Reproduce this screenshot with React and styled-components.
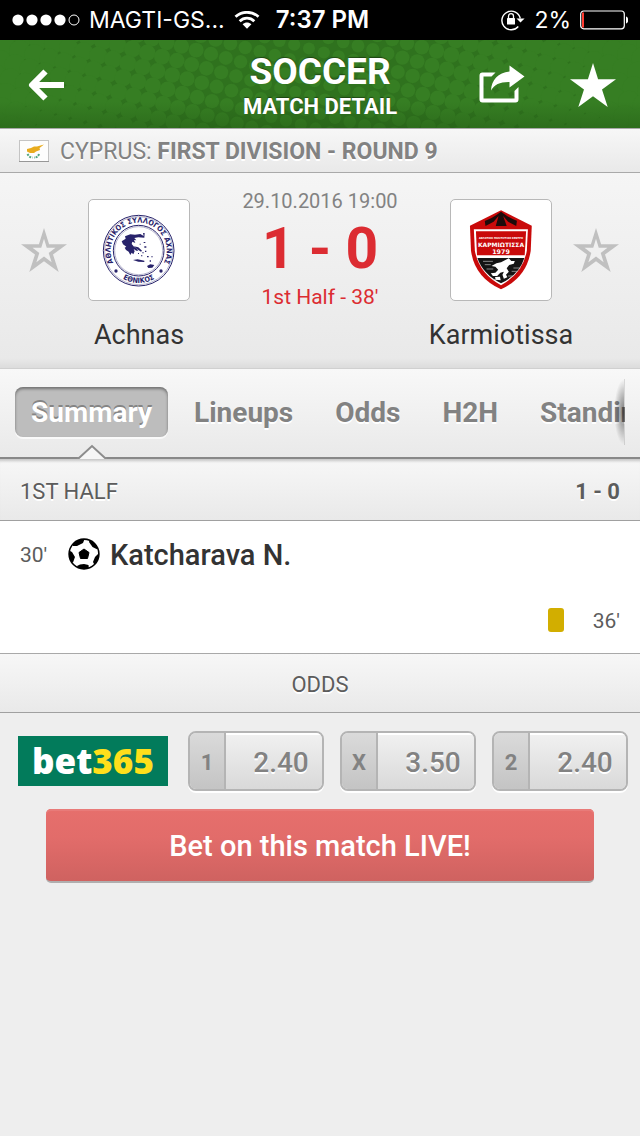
import React from "react";
import styled, { createGlobalStyle, css } from "styled-components";

const GlobalStyle = createGlobalStyle`
  * { box-sizing: border-box; }
  body {
    margin: 0;
    background: #eeeeee;
    font-family: Roboto, "Liberation Sans", sans-serif;
    color: #333333;
  }
  button { font: inherit; color: inherit; border: 0; padding: 0; margin: 0; background: none; cursor: pointer; }
  h1, h2, p, ul { margin: 0; padding: 0; font-weight: inherit; }
  ul { list-style: none; }
  svg { display: block; }
`;

const Screen = styled.div`
  display: flex;
  flex-direction: column;
  min-height: 100vh;
`;

/* ---------- status bar ---------- */

const StatusBar = styled.div`
  display: grid;
  grid-template-columns: 1fr auto 1fr;
  align-items: center;
  gap: 16px;
  height: 40px;
  padding: 0 12px;
  background: #000;
  color: #fff;
  font-family: Inter, "Liberation Sans", sans-serif;
  font-size: 23px;
  line-height: 40px;
  white-space: nowrap;
`;

const StatusGroup = styled.div`
  display: flex;
  align-items: center;
  justify-content: ${(p) => (p.$end ? "flex-end" : "flex-start")};
  gap: 9px;
`;

const Clock = styled.span`
  font-size: 24px;
  font-weight: 600;
`;

/* ---------- header ---------- */

const Header = styled.header`
  position: relative;
  display: grid;
  grid-template-columns: 1fr auto 1fr;
  align-items: center;
  height: 88px;
  padding: 2px 23px 0;
  background: #2f721e;
  color: #fff;
  overflow: hidden;
`;

const Halftone = styled.svg`
  position: absolute;
  inset: 0;
  width: 100%;
  height: 100%;
`;

const HeaderSide = styled.div`
  position: relative;
  display: flex;
  align-items: center;
  justify-content: ${(p) => (p.$end ? "flex-end" : "flex-start")};
  gap: 44px;
`;

const HeaderTitle = styled.div`
  position: relative;
  text-align: center;
  text-shadow: 0 -1px 1px rgba(0, 0, 0, 0.4);
`;

const Title = styled.h1`
  font-size: 37px;
  line-height: 44px;
  font-weight: 700;
`;

const Subtitle = styled.p`
  font-size: 22px;
  line-height: 26px;
  font-weight: 700;
`;

/* ---------- bars ---------- */

const barFill = css`
  background: linear-gradient(#f7f7f7, #e9e9e9);
  text-shadow: 0 2px 0 #fff;
`;

const LeagueBar = styled.div`
  ${barFill}
  display: flex;
  align-items: center;
  gap: 11px;
  height: 45px;
  padding: 2px 19px 0;
  border-top: 1px solid #a9a9a9;
  border-bottom: 1px solid #a9a9a9;
  color: #828282;
  font-size: 23px;
  line-height: 30px;
`;

const Flag = styled.svg`
  width: 30px;
  height: 22px;
  margin-bottom: 2px;
`;

const SectionBar = styled.h2`
  ${barFill}
  display: flex;
  align-items: center;
  justify-content: ${(p) => (p.$center ? "center" : "space-between")};
  height: ${(p) => (p.$center ? 59 : 62)}px;
  padding: 4px 20px 0;
  border-bottom: 1px solid #a0a0a0;
  box-shadow: ${(p) => (p.$center ? "none" : "inset 0 4px 3px -2px rgba(0, 0, 0, 0.2)")};
  color: #5c5c5c;
  font-size: 22px;
  line-height: 28px;
`;

/* ---------- match panel ---------- */

const MatchPanel = styled.section`
  display: flex;
  height: 196px;
  padding: 0 20px;
  background: linear-gradient(#f5f5f5, #e9e9e9 95%, #dcdcdc);
  border-bottom: 1px solid #d0d0d0;
`;

const FavButton = styled.button`
  flex: none;
  width: 48px;
  height: 154px;
`;

const Team = styled.div`
  flex: none;
  display: flex;
  flex-direction: column;
  align-items: center;
  width: 142px;
  padding-top: 26px;
`;

const Crest = styled.div`
  width: 102px;
  height: 102px;
  background: #fff;
  border: 1px solid #b8b8b8;
  border-radius: 5px;
`;

const TeamName = styled.span`
  margin-top: 16px;
  font-size: 27px;
  line-height: 36px;
  white-space: nowrap;
`;

const ScoreBox = styled.div`
  flex: 1;
  display: flex;
  flex-direction: column;
  align-items: center;
  padding-top: 15px;
  white-space: nowrap;
`;

const Kickoff = styled.p`
  color: #828282;
  font-size: 20px;
  line-height: 26px;
`;

const Score = styled.p`
  color: #dc2c32;
  font-size: 57px;
  font-weight: 700;
  line-height: 70px;
`;

const Phase = styled.p`
  color: #dc2c32;
  font-size: 21px;
  line-height: 26px;
`;

/* ---------- tabs ---------- */

const TabBar = styled.nav`
  height: 90px;
  padding-right: 15px;
  background: linear-gradient(#888, #888) bottom / 100% 2px no-repeat,
    linear-gradient(#f8f8f8, #e9e9e9);
`;

const TabScroller = styled.div`
  position: relative;
  display: flex;
  gap: 10px;
  height: 90px;
  padding: 18px 0 0 15px;
  overflow: hidden;

  &::after {
    content: "";
    position: absolute;
    top: 10px;
    right: 0;
    width: 10px;
    height: 66px;
    border-right: 1px solid rgba(0, 0, 0, 0.12);
    background: radial-gradient(ellipse at right center, rgba(0, 0, 0, 0.5), rgba(0, 0, 0, 0) 70%);
  }
`;

const Tab = styled.button`
  position: relative;
  flex: none;
  height: 50px;
  padding: 0 16px;
  border-radius: 8px;
  font-size: 28px;
  font-weight: 700;
  line-height: 52px;
  color: ${(p) => (p.$active ? "#fff" : "#828282")};
  text-shadow: ${(p) => (p.$active ? "0 -2px 0 #858585" : "0 2px 0 #fff")};
  background: ${(p) => (p.$active ? "#bdbdbd" : "none")};
  box-shadow: ${(p) =>
    p.$active ? "inset 0 2px 3px rgba(0, 0, 0, 0.4), 0 2px 0 rgba(255, 255, 255, 0.7)" : "none"};
`;

const TabPointer = styled.svg`
  position: absolute;
  top: 57px;
  left: 50%;
  width: 30px;
  height: 15px;
  margin-left: -15px;
`;

/* ---------- events ---------- */

const EventList = styled.ul`
  background: #fff;
  border-bottom: 1px solid #a9a9a9;
`;

const EventRow = styled.li`
  display: flex;
  flex-direction: ${(p) => (p.$away ? "row-reverse" : "row")};
  align-items: center;
  height: 66px;
  padding: 0 20px;
`;

const Minute = styled.span`
  width: ${(p) => (p.$away ? 56 : 48)}px;
  padding-top: 2px;
  text-align: ${(p) => (p.$away ? "right" : "left")};
  font-size: 21px;
  line-height: 28px;
  color: #5c5c5c;
`;

const Player = styled.span`
  margin-left: 10px;
  padding-top: 2px;
  font-size: 29px;
  font-weight: 500;
  line-height: 36px;
`;

const YellowCard = styled.span`
  width: 16px;
  height: 24px;
  border-radius: 3px;
  background: #d2ae00;
`;

/* ---------- odds ---------- */

const OddsRow = styled.div`
  display: flex;
  align-items: center;
  gap: 16px;
  padding: 18px 12px 0 18px;
`;

const Bookmaker = styled.a`
  flex: none;
  width: 150px;
  height: 50px;
  margin-right: 4px;
  background: #027b5b;
  color: #fff;
  font-family: "Open Sans", "Noto Sans", sans-serif;
  font-size: 35px;
  font-weight: 800;
  line-height: 50px;
  text-align: center;
  text-decoration: none;

  span { color: #ffdf1b; }
`;

const Odd = styled.button`
  flex: 1;
  display: flex;
  height: 60px;
  border: 2px solid #b4b4b4;
  border-radius: 8px;
  overflow: hidden;
  box-shadow: 0 2px 0 #fff;
  color: #828282;
`;

const OddKey = styled.span`
  width: 36px;
  border-right: 2px solid #b4b4b4;
  background: linear-gradient(#dadada, #c4c4c4);
  font-size: 22px;
  font-weight: 700;
  line-height: 60px;
`;

const OddValue = styled.span`
  flex: 1;
  padding-left: 14px;
  background: linear-gradient(#f1f1f1, #d9d9d9);
  box-shadow: inset 0 2px 0 #fff;
  font-size: 28px;
  font-weight: 500;
  line-height: 60px;
  text-shadow: 0 2px 0 #fff;
`;

const LiveButton = styled.button`
  height: 74px;
  margin: 18px 46px 0;
  border-bottom: 2px solid #b0aeae;
  border-radius: 5px;
  background: linear-gradient(#e66f6c, #e26c6a 40%, #cf6260);
  box-shadow: inset 0 2px 0 #e87b79;
  color: #fff;
  font-size: 29px;
  font-weight: 500;
  line-height: 74px;
`;

/* ---------- drawings ---------- */

const dots = [];
for (let i = -8; i < 50; i++) {
  for (let j = -14; j < 14; j++) {
    const x = 162 + (i - 8) * 14.8 - j * 4.6;
    const y = 16.7 + (i - 8) * 3.9 + j * 14.4;
    if (x < -12 || x > 652 || y < -12 || y > 100) continue;
    const away = Math.abs(x - 310) / 310;
    dots.push({ x, y, r: 6 + 4.8 * Math.pow(away, 1.2) });
  }
}

const HeaderPattern = () => (
  <Halftone viewBox="0 0 640 88" preserveAspectRatio="xMidYMid slice" aria-hidden="true">
    <defs>
      <linearGradient id="shade" x1="0" y1="0" x2="0" y2="1">
        <stop offset="0.7" stopColor="#1d4f10" stopOpacity="0" />
        <stop offset="1" stopColor="#1d4f10" stopOpacity="0.35" />
      </linearGradient>
    </defs>
    {dots.map((d, i) => (
      <circle key={i} cx={d.x} cy={d.y} r={d.r} fill="#367e23" />
    ))}
    <rect width="640" height="88" fill="url(#shade)" />
  </Halftone>
);

const SignalDots = () => (
  <svg width="68" height="12" viewBox="0 0 68 12" aria-hidden="true">
    {[0, 1, 2, 3].map((i) => (
      <circle key={i} cx={6 + i * 14} cy="6" r="5.6" fill="#fff" />
    ))}
    <circle cx="62" cy="6" r="5" fill="none" stroke="#fff" />
  </svg>
);

const WifiIcon = () => (
  <svg width="26" height="18" viewBox="0 0 26 18" fill="none" stroke="#fff" strokeWidth="2.8" aria-hidden="true">
    <path d="M1.5 5.8C8-.2 18-.2 24.500 5.800" />
    <path d="M5.700 10.200C9.900 6.200 16.100 6.200 20.300 10.200" />
    <path d="M8.600 13.300C11.300 10.800 14.700 10.800 17.400 13.300L13 17.800Z" fill="#fff" stroke="none" />
  </svg>
);

const RotationLock = () => (
  <svg width="24" height="22" viewBox="0 0 24 22" aria-hidden="true">
    <path d="M17.300 17.500A9.300 9.300 0 1 1 19.300 9.500" fill="none" stroke="#fff" strokeWidth="1.400" />
    <path d="M15.500 9.400H23.600L19.500 13.600Z" fill="#fff" />
    <rect x="6" y="9" width="8" height="6.500" rx="0.600" fill="#fff" />
    <path d="M7.500 9V7.200a2.500 2.500 0 0 1 5 0V9" fill="none" stroke="#fff" strokeWidth="1.300" />
  </svg>
);

const Battery = () => (
  <svg width="48" height="20" viewBox="0 0 48 20" aria-hidden="true">
    <rect x="0.700" y="1" width="43.600" height="17.800" rx="3" fill="none" stroke="#fff" strokeWidth="1.200" />
    <rect x="2" y="2.500" width="2" height="15" fill="#ff3b30" />
    <path d="M46 6.500c3 0.500 3 6.500 0 7Z" fill="#fff" />
  </svg>
);

const BackArrow = () => (
  <svg width="48" height="34" viewBox="0 0 48 34" aria-hidden="true">
    <path d="M41 17H10M22.500 3.500L9 17L22.500 30.500" fill="none" stroke="#fff" strokeWidth="6" strokeLinejoin="round" />
  </svg>
);

const ShareIcon = () => (
  <svg width="46" height="40" viewBox="0 0 46 40" fill="#fff" aria-hidden="true">
    <path d="M16.500 7.500H3.500Q0.500 7.500 0.500 10.500V34.500Q0.500 37.500 3.500 37.500H36.500Q39.500 37.500 39.500 34.500V22L35.500 26V33.500H4.500V11.500H12.500Z" />
    <path d="M30.500 0.500L45.500 11.500L30.500 22.500V17C21 16.800 15.500 19.500 12 25.500C12.500 15 19 7.500 30.500 6.500Z" />
  </svg>
);

const starPath = "M24 1L29.200 17.700H47.500L33.200 28L39 46L24 35L9 46L14.800 28L0.500 17.700H18.800Z";

const SolidStar = () => (
  <svg width="48" height="46" viewBox="0 0 48 47" aria-hidden="true">
    <path d={starPath} fill="#fff" />
  </svg>
);

const OutlineStar = () => (
  <svg width="48" height="46" viewBox="0 0 48 47" aria-hidden="true">
    <path
      d={starPath + "M24 12L21.200 21.200H12.300L19.200 26.500L16.200 36L24 30.200L31.800 36L28.800 26.500L35.700 21.200H26.800Z"}
      fill="#c0c0c0"
      fillRule="evenodd"
    />
  </svg>
);

const CyprusFlag = () => (
  <Flag viewBox="0 0 30 22" role="img" aria-label="Cyprus">
    <rect x="0.500" y="0.500" width="29" height="21" fill="#fdfdfd" stroke="#c4c4c4" />
    <path d="M0 21.500H30" stroke="#979797" />
    <path d="M8 9L12 8L15 6.500L18 6.500L25 4.500L20.500 8L21 10L17 11.500L15 13L11 13L8 11.500Z" fill="#e8ab1d" />
    <path d="M8.500 14C10 17 12 17.500 13.500 17.500M20 14C19 17 17 17.500 15 17.500" fill="none" stroke="#4fa57e" strokeWidth="2" strokeDasharray="2 1" />
  </Flag>
);

const AchnasCrest = () => (
  <svg width="100" height="100" viewBox="-16 -15 300 300" role="img" aria-label="Achnas crest">
    <defs>
      <path id="arcTop" d="M73.600 196.400A84 84 0 1 1 192.400 196.400" />
      <path id="arcBottom" d="M36 137A97 97 0 0 0 230 137" />
    </defs>
    <g fill="none" stroke="#28236b">
      <circle cx="133" cy="137" r="106" strokeWidth="3" />
      <circle cx="133" cy="137" r="102" strokeWidth="1" />
      <circle cx="133" cy="137" r="76" strokeWidth="3" />
      <circle cx="133" cy="137" r="72" strokeWidth="1" />
    </g>
    <g fill="#28236b" fontFamily="'DejaVu Sans Condensed', 'Liberation Sans', sans-serif" fontWeight="700" fontSize="22">
      <text textAnchor="middle">
        <textPath href="#arcTop" startOffset="50%">ΑΘΛΗΤΙΚΟΣ ΣΥΛΛΟΓΟΣ ΑΧΝΑΣ</textPath>
      </text>
      <text textAnchor="middle">
        <textPath href="#arcBottom" startOffset="50%">ΕΘΝΙΚΟΣ</textPath>
      </text>
    </g>
    <g fill="#28236b">
      <circle cx="65" cy="198" r="5" />
      <circle cx="200" cy="198" r="5" />
      <path d="M82 109L94 101L92 94L108 88L122 89L138 87L148 93L146 84L151 84L150 98L132 97L120 99L126 106L119 105L123 114L114 110L112 117L119 125L126 130L132 137L126 137L118 132L121 139L117 148L112 143L108 150L103 140L95 135L91 128L96 125L86 118Z" />
      <path d="M118 124L132 127L143 137L140 140L128 132ZM116 165L130 163L150 167L150 171L132 170ZM158 183L168 178L180 180L174 188L162 189Z" />
      <path d="M148 111h5v3h-5zM136 116h3v3h-3zM150 124h6v4h-6zM152 137h4v4h-4zM144 142h4v3h-4zM158 153h5v4h-5zM140 151h4v3h-4zM166 166h4v4h-4zM171 154h4v3h-4zM131 144h3v3h-3z" />
    </g>
  </svg>
);

const KarmiotissaCrest = () => (
  <svg width="100" height="100" viewBox="-15 -17 300 300" role="img" aria-label="Karmiotissa crest">
    <g transform="translate(-8 0) scale(1.06 1)">
      <path d="M135 14L222 60L219 135Q208 215 135 251Q60 215 50 135L47 60Z" fill="#c90a0a" />
      <path d="M58 71H211L208 135Q197 202 135 239Q72 202 61 135Z" fill="#fff" />
      <path d="M64 77H206L202 149H67Z" fill="#c90a0a" />
      <path d="M68 157H201Q187 206 135 233Q84 206 68 157Z" fill="#141414" />
      <path d="M135 18L148 28Q165 40 180 45L178 61L155 48L141 31L151 61H120L128 31L114 48L91 61L89 46Q108 39 122 28Z" fill="#1c0b0b" />
      <path d="M84 167H112M89 177H106M94 190H113M170 187H190M165 197H182M112 222H125M155 211H170" stroke="#bdbdbd" strokeWidth="2" />
      <path d="M146 164L157 158L164 166L174 166L171 174L158 178L151 188L157 198L149 207L153 215L143 219L139 207L143 198L133 201L124 211L112 211L106 203L119 201L127 192L119 183L108 181L122 173L135 170ZM118 214L132 213L134 224L120 222Z" fill="#fff" />
    </g>
    <g fill="#fff" textAnchor="middle" fontWeight="700">
      <text x="135" y="99" fontSize="8" fontFamily="'DejaVu Sans Condensed', sans-serif">ΑΘΛΗΤΙΚΟ ΠΟΛΙΤΙΣΤΙΚΟ ΚΕΝΤΡΟ</text>
      <text x="135" y="125" fontSize="18" fontFamily="'DejaVu Sans', sans-serif">ΚΑΡΜΙΩΤΙΣΣΑ</text>
      <text x="135" y="146" fontSize="19" fontFamily="'DejaVu Sans', sans-serif">1979</text>
    </g>
  </svg>
);

const Ball = () => (
  <svg width="32" height="32" viewBox="0 0 32 32" role="img" aria-label="Goal">
    <clipPath id="ballEdge">
      <circle cx="16" cy="16" r="15" />
    </clipPath>
    <g clipPath="url(#ballEdge)">
      <path d="M16 11L21 14.500L19.500 20.500H12.500L11 14.500Z" stroke="#000" strokeLinejoin="round" />
      <path d="M5 4L12 0L17 0L15 5L9 8L5 8Z" />
      <path d="M22 0L30 7L29.500 11.500L24.500 9L21 4Z" />
      <path d="M0 12L4 14L7 19L5 24.500L0 24Z" />
      <path d="M32 14L27 19L25 24L27 28L32 23Z" />
      <path d="M9 28L12 26.500L16 26L20.500 27L21 32H11Z" />
    </g>
    <circle cx="16" cy="16" r="14.900" fill="none" stroke="#000" strokeWidth="1.600" />
  </svg>
);

const tabs = ["Summary", "Lineups", "Odds", "H2H", "Standings"];
const odds = [
  { label: "1", value: "2.40" },
  { label: "X", value: "3.50" },
  { label: "2", value: "2.40" },
];

export default function App() {
  return (
    <>
      <GlobalStyle />
      <Screen>
        <StatusBar>
          <StatusGroup>
            <SignalDots />
            <span>MAGTI-GS...</span>
            <WifiIcon />
          </StatusGroup>
          <Clock>7:37 PM</Clock>
          <StatusGroup $end>
            <RotationLock />
            <span>2%</span>
            <Battery />
          </StatusGroup>
        </StatusBar>

        <Header>
          <HeaderPattern />
          <HeaderSide>
            <button aria-label="Back"><BackArrow /></button>
          </HeaderSide>
          <HeaderTitle>
            <Title>SOCCER</Title>
            <Subtitle>MATCH DETAIL</Subtitle>
          </HeaderTitle>
          <HeaderSide $end>
            <button aria-label="Share"><ShareIcon /></button>
            <button aria-label="Favourite match"><SolidStar /></button>
          </HeaderSide>
        </Header>

        <LeagueBar>
          <CyprusFlag />
          <span>CYPRUS: <b>FIRST DIVISION - ROUND 9</b></span>
        </LeagueBar>

        <MatchPanel>
          <FavButton aria-label="Follow Achnas"><OutlineStar /></FavButton>
          <Team>
            <Crest><AchnasCrest /></Crest>
            <TeamName>Achnas</TeamName>
          </Team>
          <ScoreBox>
            <Kickoff>29.10.2016 19:00</Kickoff>
            <Score>1 - 0</Score>
            <Phase>1st Half - 38'</Phase>
          </ScoreBox>
          <Team>
            <Crest><KarmiotissaCrest /></Crest>
            <TeamName>Karmiotissa</TeamName>
          </Team>
          <FavButton aria-label="Follow Karmiotissa"><OutlineStar /></FavButton>
        </MatchPanel>

        <TabBar>
          <TabScroller>
            {tabs.map((name, i) => (
              <Tab key={name} $active={i === 0}>
                {name}
                {i === 0 && (
                  <TabPointer viewBox="0 0 30 15" aria-hidden="true">
                    <path d="M1 15L15 2L29 15Z" fill="#f6f6f6" />
                    <path d="M0 14H2L15 2L28 14H30" fill="none" stroke="#8c8c8c" strokeWidth="2" />
                  </TabPointer>
                )}
              </Tab>
            ))}
          </TabScroller>
        </TabBar>

        <SectionBar>
          <span>1ST HALF</span>
          <b>1 - 0</b>
        </SectionBar>
        <EventList>
          <EventRow>
            <Minute>30'</Minute>
            <Ball />
            <Player>Katcharava N.</Player>
          </EventRow>
          <EventRow $away>
            <Minute $away>36'</Minute>
            <YellowCard role="img" aria-label="Yellow card" />
          </EventRow>
        </EventList>

        <SectionBar $center>ODDS</SectionBar>
        <OddsRow>
          <Bookmaker href="#bet365">bet<span>365</span></Bookmaker>
          {odds.map((o) => (
            <Odd key={o.label}>
              <OddKey>{o.label}</OddKey>
              <OddValue>{o.value}</OddValue>
            </Odd>
          ))}
        </OddsRow>
        <LiveButton>Bet on this match LIVE!</LiveButton>
      </Screen>
    </>
  );
}
